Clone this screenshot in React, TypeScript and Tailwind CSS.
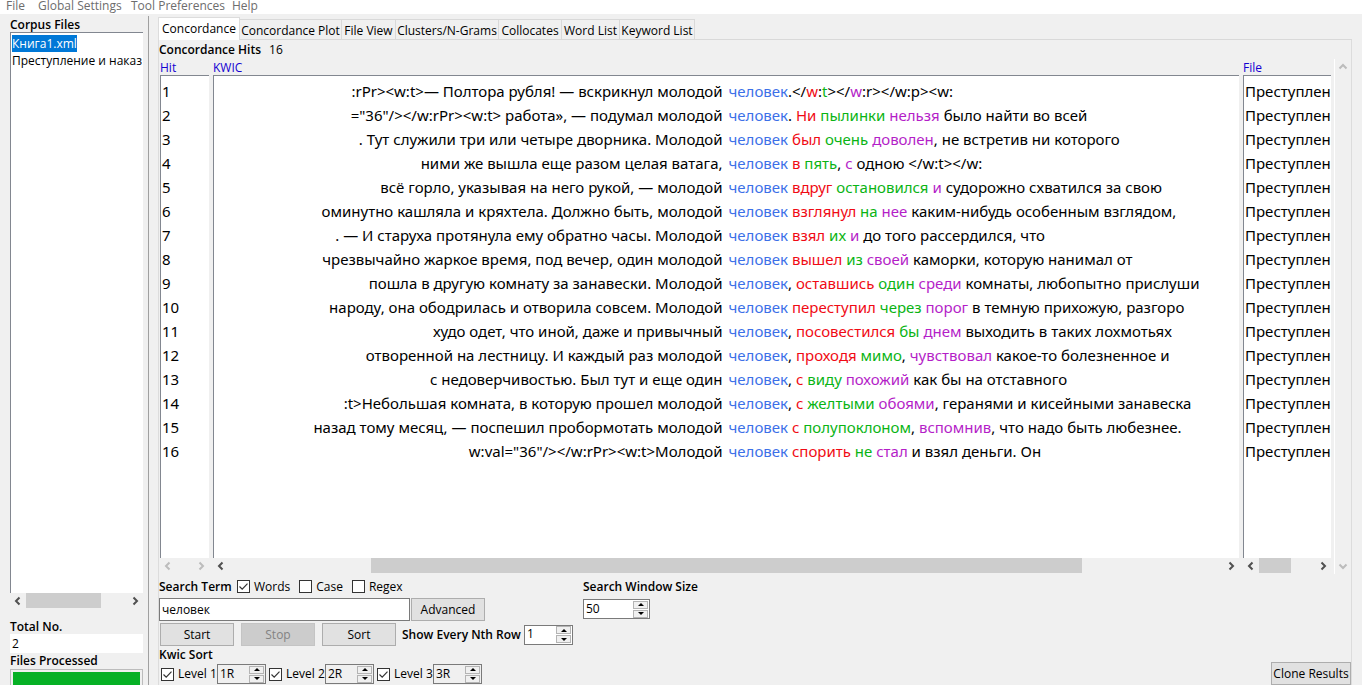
import { ReactNode, useState } from "react";

type Hit = {
  left: string;
  // [text between node and first sort word, 1R, between, 2R, between, 3R, rest]
  right: [string, string, string, string, string, string, string];
};

const hits: Hit[] = [
  { left: ":rPr><w:t>— Полтора рубля! — вскрикнул молодой", right: [".</", "w", ":", "t", "></", "w", ":r></w:p><w:"] },
  { left: '="36"/></w:rPr><w:t> работа», — подумал молодой', right: [". ", "Ни", " ", "пылинки", " ", "нельзя", " было найти во всей"] },
  { left: ". Тут служили три или четыре дворника. Молодой", right: [" ", "был", " ", "очень", " ", "доволен", ", не встретив ни которого"] },
  { left: "ними же вышла еще разом целая ватага,", right: [" ", "в", " ", "пять", ", ", "с", " одною </w:t></w:"] },
  { left: "всё горло, указывая на него рукой, — молодой", right: [" ", "вдруг", " ", "остановился", " ", "и", " судорожно схватился за свою"] },
  { left: "оминутно кашляла и кряхтела. Должно быть, молодой", right: [" ", "взглянул", " ", "на", " ", "нее", " каким-нибудь особенным взглядом,"] },
  { left: ". — И старуха протянула ему обратно часы. Молодой", right: [" ", "взял", " ", "их", " ", "и", " до того рассердился, что"] },
  { left: "чрезвычайно жаркое время, под вечер, один молодой", right: [" ", "вышел", " ", "из", " ", "своей", " каморки, которую нанимал от"] },
  { left: "пошла в другую комнату за занавески. Молодой", right: [", ", "оставшись", " ", "один", " ", "среди", " комнаты, любопытно прислуши"] },
  { left: "народу, она ободрилась и отворила совсем. Молодой", right: [" ", "переступил", " ", "через", " ", "порог", " в темную прихожую, разгоро"] },
  { left: "худо одет, что иной, даже и привычный", right: [", ", "посовестился", " ", "бы", " ", "днем", " выходить в таких лохмотьях"] },
  { left: "отворенной на лестницу. И каждый раз молодой", right: [", ", "проходя", " ", "мимо", ", ", "чувствовал", " какое-то болезненное и"] },
  { left: "с недоверчивостью. Был тут и еще один", right: [", ", "с", " ", "виду", " ", "похожий", " как бы на отставного"] },
  { left: ":t>Небольшая комната, в которую прошел молодой", right: [", ", "с", " ", "желтыми", " ", "обоями", ", геранями и кисейными занавеска"] },
  { left: "назад тому месяц, — поспешил пробормотать молодой", right: [" ", "с", " ", "полупоклоном", ", ", "вспомнив", ", что надо быть любезнее."] },
  { left: 'w:val="36"/></w:rPr><w:t>Молодой', right: [" ", "спорить", " ", "не", " ", "стал", " и взял деньги. Он"] },
];

const tabs = [
  { name: "Concordance Plot", width: "w-[102px]" },
  { name: "File View", width: "w-[54px]" },
  { name: "Clusters/N-Grams", width: "w-[103px]" },
  { name: "Collocates", width: "w-[63px]" },
  { name: "Word List", width: "w-[58px]" },
  { name: "Keyword List", width: "w-[75px]" },
];

const chevrons = {
  left: "M6.5 1.5 3 5l3.5 3.5",
  right: "M3.5 1.5 7 5 3.5 8.5",
  up: "M1.5 6.5 5 3l3.5 3.5",
  down: "M1.5 3.5 5 7l3.5-3.5",
};

function Arrow({ dir, disabled = false }: { dir: keyof typeof chevrons; disabled?: boolean }) {
  return (
    <button
      type="button"
      aria-label={"Scroll " + dir}
      disabled={disabled}
      className="flex size-4 shrink-0 items-center justify-center text-[#505050] disabled:text-[#bcbcbc]"
    >
      <svg viewBox="0 0 10 10" className="size-[10px]" fill="none" stroke="currentColor" strokeWidth="2">
        <path d={chevrons[dir]} />
      </svg>
    </button>
  );
}

function HScroll({ disabled, children }: { disabled?: boolean; children?: ReactNode }) {
  return (
    <div className="flex h-4 items-stretch justify-between">
      <Arrow dir="left" disabled={disabled} />
      <div className="flex h-[15px] min-w-0 grow">{children}</div>
      <Arrow dir="right" disabled={disabled} />
    </div>
  );
}

function Check({ label, initial = false }: { label: string; initial?: boolean }) {
  const [on, setOn] = useState(initial);
  return (
    <label className="flex items-center gap-1 whitespace-nowrap">
      <span className="grid size-[13px] shrink-0">
        <input
          type="checkbox"
          checked={on}
          onChange={() => setOn(!on)}
          className="col-start-1 row-start-1 size-[13px] appearance-none border border-[#333] bg-white"
        />
        {on && (
          <svg
            viewBox="0 0 13 13"
            className="pointer-events-none z-10 col-start-1 row-start-1 size-[13px]"
            fill="none"
            stroke="#333"
            strokeWidth="1.2"
          >
            <path d="M2.5 6.5 5.2 9.2 10.5 3.6" />
          </svg>
        )}
      </span>
      {label}
    </label>
  );
}

function Spin({ id, label, value, wide, gray }: { id: string; label?: string; value: string; wide?: boolean; gray?: boolean }) {
  const step =
    "flex h-2 w-[15px] items-center justify-center border border-[#b4b4b4] bg-[#f0f0f0]";
  return (
    <span
      className={
        "flex h-5 shrink-0 items-center border border-[#7a7a7a] pr-px " +
        (wide ? "w-[67px] " : "w-[49px] ") +
        (gray ? "bg-[#f0f0f0]" : "bg-white")
      }
    >
      <input
        id={id}
        aria-label={label}
        defaultValue={value}
        className="h-[18px] w-0 min-w-0 grow bg-transparent pb-[2px] pl-[2px] outline-none"
      />
      <span className="flex shrink-0 flex-col gap-px">
        <button type="button" aria-label="Increase" className={step}>
          <svg viewBox="0 0 6 3" className="h-[3px] w-[6px]">
            <path d="M0 3 3 0l3 3z" />
          </svg>
        </button>
        <button type="button" aria-label="Decrease" className={step}>
          <svg viewBox="0 0 6 3" className="h-[3px] w-[6px]">
            <path d="M0 0h6L3 3z" />
          </svg>
        </button>
      </span>
    </span>
  );
}

const button =
  "flex h-[23px] w-[74px] shrink-0 items-center justify-center border border-[#adadad] bg-[#e1e1e1] disabled:border-[#c4c4c4] disabled:bg-[#cccccc] disabled:text-[#838383]";

export default function App() {
  return (
    <div className="flex h-screen min-h-[640px] flex-col overflow-hidden bg-[#f0f0f0] font-['Open_Sans','Noto_Sans',sans-serif] text-[12px] leading-4 text-black">
      <nav className="flex h-[14px] shrink-0 items-center bg-white pb-[2px] pl-[6px] leading-3 text-[#6d6d6d]">
        <button type="button" className="w-8 text-left">File</button>
        <button type="button" className="w-[93px] text-left whitespace-nowrap">Global Settings</button>
        <button type="button" className="w-[101px] text-left whitespace-nowrap">Tool Preferences</button>
        <button type="button">Help</button>
      </nav>

      <div className="flex min-h-0 grow">
        <aside className="mt-[2px] flex w-[149px] shrink-0 flex-col border-r border-[#a0a0a0] pr-[5px] pl-[10px]">
          <h2 className="h-4 leading-[18px] font-semibold">Corpus Files</h2>
          <ul className="min-h-0 grow overflow-hidden border-t border-l border-[#828790] bg-white px-px pt-[2px] whitespace-nowrap">
            <li className="h-[17px] leading-[17px]">
              <span className="inline-block bg-[#0078d7] text-white">Книга1.xml</span>
            </li>
            <li className="h-[18px] overflow-hidden leading-[18px]">Преступление и наказание.xml</li>
          </ul>
          <HScroll>
            <div className="w-[75px] bg-[#cdcdcd]" />
          </HScroll>
          <h2 className="mt-[9px] h-4 leading-[18px] font-semibold">Total No.</h2>
          <div className="h-[19px] bg-white pl-[2px] leading-[19px]">2</div>
          <label htmlFor="processed" className="h-4 leading-4 font-semibold">Files Processed</label>
          <div className="h-4 shrink-0 border border-b-0 border-[#bcbcbc] p-[2px] pb-0">
            <progress
              id="processed"
              value={2}
              max={2}
              className="block h-full w-full appearance-none [&::-webkit-progress-bar]:bg-[#e6e6e6] [&::-webkit-progress-value]:bg-[#06b025]"
            />
          </div>
        </aside>

        <main className="mr-[10px] ml-[9px] flex min-w-0 grow flex-col">
          <div className="flex h-[26px] shrink-0 items-end pt-[3px]">
            <button type="button" className="h-[23px] w-[82px] border border-b-0 border-[#dcdcdc] bg-white">
              Concordance
            </button>
            {tabs.map((t) => (
              <button
                key={t.name}
                type="button"
                className={
                  "h-[21px] border border-l-0 border-[#d9d9d9] bg-[#f0f0f0] pt-[2px] whitespace-nowrap " + t.width
                }
              >
                {t.name}
              </button>
            ))}
            <div className="grow border-t border-[#d9d9d9]" />
          </div>

          <div className="flex min-h-0 grow flex-col border-r border-l border-[#dcdcdc]">
            <div className="mt-px flex h-[18px] shrink-0 items-center gap-2">
              <h1 className="font-semibold">Concordance Hits</h1>
              <span>16</span>
            </div>

            <div className="flex min-h-0 grow pl-px">
              <table className="grid min-w-0 grow grid-cols-[49px_1fr_88px] grid-rows-[17px_27px_repeat(15,24px)_1fr_16px] gap-x-1 font-['Noto_Sans','Open_Sans',sans-serif] text-[15px]">
                <thead className="contents">
                  <tr className="contents font-['Open_Sans','Noto_Sans',sans-serif] text-[12px] text-[#1400d2]">
                    {["Hit", "KWIC", "File"].map((h) => (
                      <th key={h} className="border-b border-[#828790] text-left leading-[17px] font-normal">
                        {h}
                      </th>
                    ))}
                  </tr>
                </thead>
                <tbody className="contents">
                  {hits.map((h, i) => {
                    const r = h.right;
                    return (
                      <tr key={i} className="contents leading-6 whitespace-pre">
                        <td className="flex items-end border-l border-[#828790] bg-white pl-px">{i + 1}</td>
                        <td className="grid grid-cols-2 items-end overflow-hidden border-l border-[#828790] bg-white">
                          <span className="flex justify-end pr-1">{h.left}</span>
                          <span className="pl-[2px]">
                            <span className="text-[#3c70e8]">человек</span>
                            {r[0]}
                            <span className="text-[#f00a14]">{r[1]}</span>
                            {r[2]}
                            <span className="text-[#0ab414]">{r[3]}</span>
                            {r[4]}
                            <span className="text-[#b41ec8]">{r[5]}</span>
                            {r[6]}
                          </span>
                        </td>
                        <td className="flex items-end overflow-hidden border-l border-[#828790] bg-white pl-px">
                          Преступление и наказание.xml
                        </td>
                      </tr>
                    );
                  })}
                  <tr className="contents">
                    <td className="border-l border-[#828790] bg-white" />
                    <td className="border-l border-[#828790] bg-white" />
                    <td className="border-l border-[#828790] bg-white" />
                  </tr>
                </tbody>
                <tfoot className="contents">
                  <tr className="contents">
                    <td><HScroll disabled /></td>
                    <td>
                      <HScroll>
                        <div className="ml-[14.3%] w-[71.5%] bg-[#cdcdcd]" />
                      </HScroll>
                    </td>
                    <td>
                      <HScroll>
                        <div className="w-8 bg-[#cdcdcd]" />
                      </HScroll>
                    </td>
                  </tr>
                </tfoot>
              </table>
              <div className="ml-[3px] flex w-[17px] shrink-0 flex-col justify-between border-l border-white">
                <Arrow dir="up" disabled />
                <Arrow dir="down" disabled />
              </div>
            </div>

            <div className="flex h-[111px] shrink-0 items-end justify-between">
              <div className="flex items-start">
                <div className="flex w-[424px] flex-col">
                  <div className="flex h-[23px] items-center">
                    <label htmlFor="term" className="w-[78px] font-semibold whitespace-nowrap">Search Term</label>
                    <div className="flex gap-[9px]">
                      <Check label="Words" initial />
                      <Check label="Case" />
                      <Check label="Regex" />
                    </div>
                  </div>
                  <div className="flex gap-px">
                    <input
                      id="term"
                      defaultValue="человек"
                      className="h-[23px] w-[251px] border border-[#7a7a7a] bg-white px-[2px] outline-none"
                    />
                    <button type="button" className={button}>Advanced</button>
                  </div>
                  <div className="mt-[2px] flex items-center gap-[7px] pl-px">
                    <button type="button" className={button}>Start</button>
                    <button type="button" disabled className={button}>Stop</button>
                    <button type="button" className={button}>Sort</button>
                    <label htmlFor="nth" className="-ml-px w-[115px] font-semibold whitespace-nowrap">
                      Show Every Nth Row
                    </label>
                    <Spin id="nth" value="1" />
                  </div>
                  <h2 className="h-[17px] leading-[18px] font-semibold">Kwic Sort</h2>
                  <div className="flex h-[22px] gap-[3px] pl-[2px]">
                    {[1, 2, 3].map((n) => (
                      <div key={n} className="flex w-[105px] items-center justify-between">
                        <Check label={"Level " + n} initial />
                        <Spin id={"level" + n} label={"Level " + n + " position"} value={n + "R"} gray />
                      </div>
                    ))}
                  </div>
                </div>
                <div className="flex flex-col">
                  <label htmlFor="window" className="h-6 leading-6 font-semibold">Search Window Size</label>
                  <Spin id="window" value="50" wide />
                </div>
              </div>
              <button
                type="button"
                className="h-[23px] w-20 border border-[#adadad] bg-[#e1e1e1] pt-px whitespace-nowrap"
              >
                Clone Results
              </button>
            </div>
          </div>
        </main>
      </div>
    </div>
  );
}
